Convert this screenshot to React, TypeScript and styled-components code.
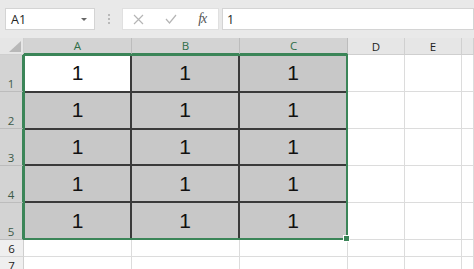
import React from 'react';
import styled, { createGlobalStyle } from 'styled-components';

const GlobalStyle = createGlobalStyle`
  html, body { margin: 0; padding: 0; background: #ffffff; overflow: hidden; }
  body { font-family: "Open Sans", "Liberation Sans", Arial, sans-serif; }
`;

const GREEN = '#3b8558';

// Formula bar area
const Toolbar = styled.div`
  height: 38px;
  background: #e9e9e9;
  display: flex;
  align-items: flex-start;
  padding: 8px 0 0 5px;
  box-sizing: border-box;
`;

const Box = styled.div<{ $w?: number; $soft?: boolean }>`
  height: 22px;
  box-sizing: border-box;
  background: #ffffff;
  border: 1px solid ${({ $soft }) => ($soft ? '#e0e0e0' : '#d4d4d4')};
  display: flex;
  align-items: center;
  ${({ $w }) => ($w ? `width: ${$w}px;` : 'flex: 1;')}
`;

const NameText = styled.span`
  flex: 1;
  padding-left: 5px;
  font-size: 12.5px;
  color: #222;
`;

const Caret = styled.span`
  width: 0;
  height: 0;
  margin-right: 7px;
  border-left: 3px solid transparent;
  border-right: 3px solid transparent;
  border-top: 3px solid #666;
`;

const Dots = styled.div`
  width: 27px;
  height: 22px;
  display: flex;
  flex-direction: column;
  align-items: center;
  justify-content: center;
  gap: 2px;
  & span { width: 2px; height: 2px; background: #a8a8a8; border-radius: 1px; }
`;

const IconBtn = styled.div`
  width: 32px;
  height: 20px;
  display: flex;
  align-items: center;
  justify-content: center;
`;

const Fx = styled.span`
  font-family: "Liberation Serif", "DejaVu Serif", serif;
  font-style: italic;
  font-size: 14px;
  color: #555;
  letter-spacing: -1px;
`;

const FormulaText = styled.span`
  padding-left: 4px;
  font-size: 12.5px;
  color: #222;
`;

const Gap = styled.div<{ $w: number }>`
  width: ${({ $w }) => $w}px;
`;

// Sheet
const Sheet = styled.div`
  display: grid;
  grid-template-columns: 24px 108px 108px 108px 57px 57px 1fr;
  grid-template-rows: 17px repeat(5, 37px) 17px 17px;
  background: #ffffff;
`;

const Corner = styled.div`
  background: #e6e6e6;
  border-right: 1px solid #cfcfcf;
  border-bottom: 1px solid #cfcfcf;
  box-sizing: border-box;
  display: flex;
  align-items: flex-end;
  justify-content: flex-end;
  padding: 0 2px 2px 0;
`;

const ColHead = styled.div<{ $sel?: boolean }>`
  box-sizing: border-box;
  background: ${({ $sel }) => ($sel ? '#d3d3d3' : '#e6e6e6')};
  border-right: 1px solid ${({ $sel }) => ($sel ? '#bcbcbc' : '#d0d0d0')};
  border-bottom: ${({ $sel }) => ($sel ? `2px solid ${GREEN}` : '1px solid #cfcfcf')};
  color: ${({ $sel }) => ($sel ? '#2f6e47' : '#222')};
  font-size: 11.5px;
  display: flex;
  align-items: center;
  justify-content: center;
`;

const RowHead = styled.div<{ $sel?: boolean }>`
  box-sizing: border-box;
  background: ${({ $sel }) => ($sel ? '#d3d3d3' : '#efefef')};
  border-bottom: 1px solid ${({ $sel }) => ($sel ? '#bcbcbc' : '#d6d6d6')};
  border-right: ${({ $sel }) => ($sel ? `2px solid ${GREEN}` : '1px solid #cfcfcf')};
  color: ${({ $sel }) => ($sel ? '#3d5a48' : '#222')};
  font-size: 11.5px;
  display: flex;
  align-items: flex-end;
  justify-content: center;
  line-height: 14px;
`;

const Range = styled.div`
  grid-column: 2 / span 3;
  grid-row: 2 / span 5;
  position: relative;
  margin-left: -1px;
  margin-top: -1px;
  box-sizing: border-box;
  border: 2px solid ${GREEN};
  background: #3a3a3a;
  display: grid;
  grid-template-columns: 105px 106px 1fr;
  grid-template-rows: repeat(5, 1fr);
  gap: 2px;
`;

const Cell = styled.div<{ $active?: boolean }>`
  background: ${({ $active }) => ($active ? '#ffffff' : '#c8c8c8')};
  display: flex;
  align-items: center;
  justify-content: center;
  font-family: "Liberation Sans", Arial, sans-serif;
  font-size: 21px;
  color: #111;
`;

const FillHandle = styled.div`
  position: absolute;
  right: -4px;
  bottom: -4px;
  width: 5px;
  height: 5px;
  background: ${GREEN};
  border: 1px solid #ffffff;
`;

const Empty = styled.div`
  box-sizing: border-box;
  border-right: 1px solid #dcdcdc;
  border-bottom: 1px solid #dcdcdc;
`;

const cols = ['A', 'B', 'C'];
const rows = [1, 2, 3, 4, 5];

export default function App() {
  return (
    <>
      <GlobalStyle />
      <Toolbar>
        <Box $w={90}>
          <NameText>A1</NameText>
          <Caret />
        </Box>
        <Dots>
          <span />
          <span />
          <span />
        </Dots>
        <Box $w={97} $soft>
          <IconBtn>
            <svg width="11" height="11" viewBox="0 0 11 11">
              <path d="M1 1 L10 10 M10 1 L1 10" stroke="#b5b5b5" strokeWidth="1.2" fill="none" />
            </svg>
          </IconBtn>
          <IconBtn>
            <svg width="12" height="10" viewBox="0 0 12 10">
              <path d="M1 5 L4.5 9 L11 1" stroke="#b5b5b5" strokeWidth="1.2" fill="none" />
            </svg>
          </IconBtn>
          <IconBtn>
            <Fx>fx</Fx>
          </IconBtn>
        </Box>
        <Gap $w={3} />
        <Box>
          <FormulaText>1</FormulaText>
        </Box>
      </Toolbar>
      <Sheet>
        <Corner>
          <svg width="12" height="11" viewBox="0 0 12 11">
            <polygon points="12,0 12,11 0,11" fill="#b8b8b8" />
          </svg>
        </Corner>
        {cols.map(c => (
          <ColHead key={c} $sel>{c}</ColHead>
        ))}
        <ColHead>D</ColHead>
        <ColHead>E</ColHead>
        <ColHead />
        {rows.map(r => (
          <React.Fragment key={r}>
            <RowHead $sel style={{ gridRow: r + 1, gridColumn: 1 }}>{r}</RowHead>
            <Empty style={{ gridRow: r + 1, gridColumn: 5 }} />
            <Empty style={{ gridRow: r + 1, gridColumn: 6 }} />
            <Empty style={{ gridRow: r + 1, gridColumn: 7 }} />
          </React.Fragment>
        ))}
        <Range>
          {rows.map(r =>
            cols.map(c => (
              <Cell key={c + r} $active={r === 1 && c === 'A'}>1</Cell>
            ))
          )}
          <FillHandle />
        </Range>
        {[6, 7].map(r => (
          <React.Fragment key={r}>
            <RowHead>{r}</RowHead>
            {[2, 3, 4, 5, 6, 7].map(c => (
              <Empty key={c} />
            ))}
          </React.Fragment>
        ))}
      </Sheet>
    </>
  );
}
